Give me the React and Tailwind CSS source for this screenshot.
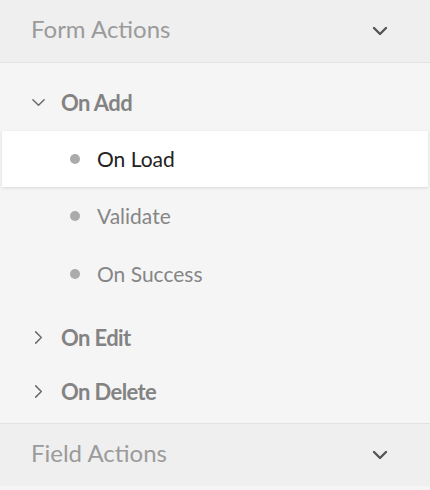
import React from 'react';

function ChevronDown({ className }) {
  return (
    <svg className={className} viewBox="0 0 16 10" fill="none" stroke="currentColor" strokeWidth="2.4" strokeLinecap="round" strokeLinejoin="round">
      <path d="M2 2 L8 8 L14 2" />
    </svg>
  );
}

function SmallChevron({ open }) {
  return (
    <svg className="w-[15px] h-[15px] text-[#6b6b6b]" viewBox="0 0 16 16" fill="none" stroke="currentColor" strokeWidth="1.6" strokeLinecap="round" strokeLinejoin="round">
      {open ? <path d="M2 5 L8 11 L14 5" /> : <path d="M5 2 L11 8 L5 14" />}
    </svg>
  );
}

function SectionHeader({ title }) {
  return (
    <div className="flex items-center justify-between h-[62px] pl-[31px] pr-[42px] bg-[#efefef]">
      <span className="text-[24px] text-[#9b9b9b] leading-none pb-[4px]">{title}</span>
      <ChevronDown className="w-[16px] h-[10px] text-[#555]" />
    </div>
  );
}

function Group({ label, open }) {
  return (
    <div className="flex items-center h-[54px] pl-[31px] gap-[15px]">
      <SmallChevron open={open} />
      <span className="text-[22px] font-bold text-[#838383] tracking-[-0.6px]">{label}</span>
    </div>
  );
}

function Item({ label, active }) {
  return (
    <div
      className={
        active
          ? 'flex items-center h-[56px] mx-[2px] pl-[68px] bg-white shadow-[0_1px_3px_rgba(0,0,0,0.12)]'
          : 'flex items-center h-[58px] pl-[70px]'
      }
    >
      <span className="w-[10px] h-[10px] rounded-full bg-[#ababab]" />
      <span className={'ml-[17px] text-[21px] ' + (active ? 'text-[#222]' : 'text-[#868686]')}>{label}</span>
    </div>
  );
}

export default function App() {
  return (
    <div className="w-[430px] h-[490px] overflow-hidden bg-[#f5f5f5]" style={{ fontFamily: 'Lato, "Open Sans", sans-serif' }}>
      <SectionHeader title="Form Actions" />
      <div className="border-t border-[#e2e2e2] bg-[#f5f5f5] pt-[12px] pb-[5px]">
        <Group label="On Add" open />
        <div className="h-[2px]" />
        <Item label="On Load" active />
        <Item label="Validate" />
        <Item label="On Success" />
        <div className="mt-[7px]">
          <Group label="On Edit" />
          <Group label="On Delete" />
        </div>
      </div>
      <div className="border-t border-[#e2e2e2]">
        <SectionHeader title="Field Actions" />
      </div>
    </div>
  );
}
